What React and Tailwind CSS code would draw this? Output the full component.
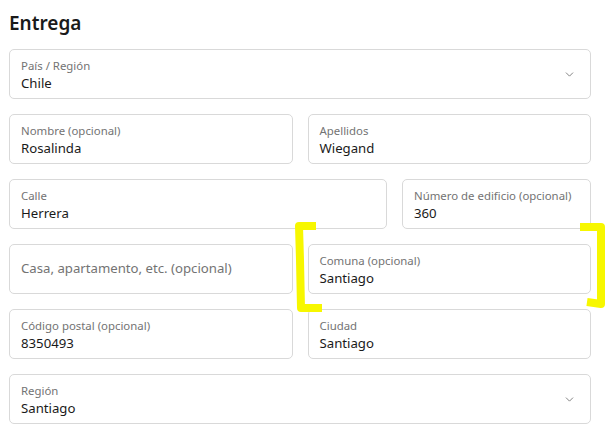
import { ChevronDown } from "lucide-react";

function Field({ label, value, select }) {
  return (
    <div className="relative h-[50px] rounded-[5px] border border-[#d9d9d9] bg-white pl-[11px] pr-[12px] pt-[8px]">
      <div className="whitespace-nowrap text-[11.4px] leading-[16px] text-[#737373]">{label}</div>
      <div className="text-[13.2px] leading-[19px] text-[#1a1a1a]">{value}</div>
      {select && (
        <ChevronDown
          size={13}
          strokeWidth={1.6}
          className="absolute right-[14px] top-[18px] text-[#707070]"
        />
      )}
    </div>
  );
}

function Placeholder({ text }) {
  return (
    <div className="flex h-[50px] items-center rounded-[5px] border border-[#d9d9d9] bg-white px-[11px]">
      <span className="text-[13.2px] text-[#737373]">{text}</span>
    </div>
  );
}

export default function App() {
  return (
    <div
      className="relative h-[438px] w-[611px] overflow-hidden bg-white"
      style={{ fontFamily: '"Noto Sans", "Open Sans", sans-serif' }}
    >
      <div className="ml-[9px] w-[582px] pt-[9px]">
        <h2 className="mb-[12px] text-[19px] font-semibold leading-[28px] text-[#1a1a1a]">Entrega</h2>
        <div className="flex flex-col gap-[15px]">
          <Field label="País / Región" value="Chile" select />
          <div className="grid grid-cols-2 gap-[15px]">
            <Field label="Nombre (opcional)" value="Rosalinda" />
            <Field label="Apellidos" value="Wiegand" />
          </div>
          <div className="grid grid-cols-[378px_189px] gap-[15px]">
            <Field label="Calle" value="Herrera" />
            <Field label="Número de edificio (opcional)" value="360" />
          </div>
          <div className="grid grid-cols-2 gap-[15px]">
            <Placeholder text="Casa, apartamento, etc. (opcional)" />
            <Field label="Comuna (opcional)" value="Santiago" />
          </div>
          <div className="grid grid-cols-2 gap-[15px]">
            <Field label="Código postal (opcional)" value="8350493" />
            <Field label="Ciudad" value="Santiago" />
          </div>
          <Field label="Región" value="Santiago" select />
        </div>
      </div>

      {/* hand-drawn highlight marks */}
      <svg className="pointer-events-none absolute left-0 top-0" width="611" height="438">
        <path
          d="M316 226 L299 226 L300 260 L301 308 L322 308"
          fill="none"
          stroke="#f7f700"
          strokeWidth="8"
          strokeLinejoin="round"
        />
        <path
          d="M580 227 L601 227 L601 265 L601 304 L587 302"
          fill="none"
          stroke="#f7f700"
          strokeWidth="8"
          strokeLinejoin="round"
        />
      </svg>
    </div>
  );
}
